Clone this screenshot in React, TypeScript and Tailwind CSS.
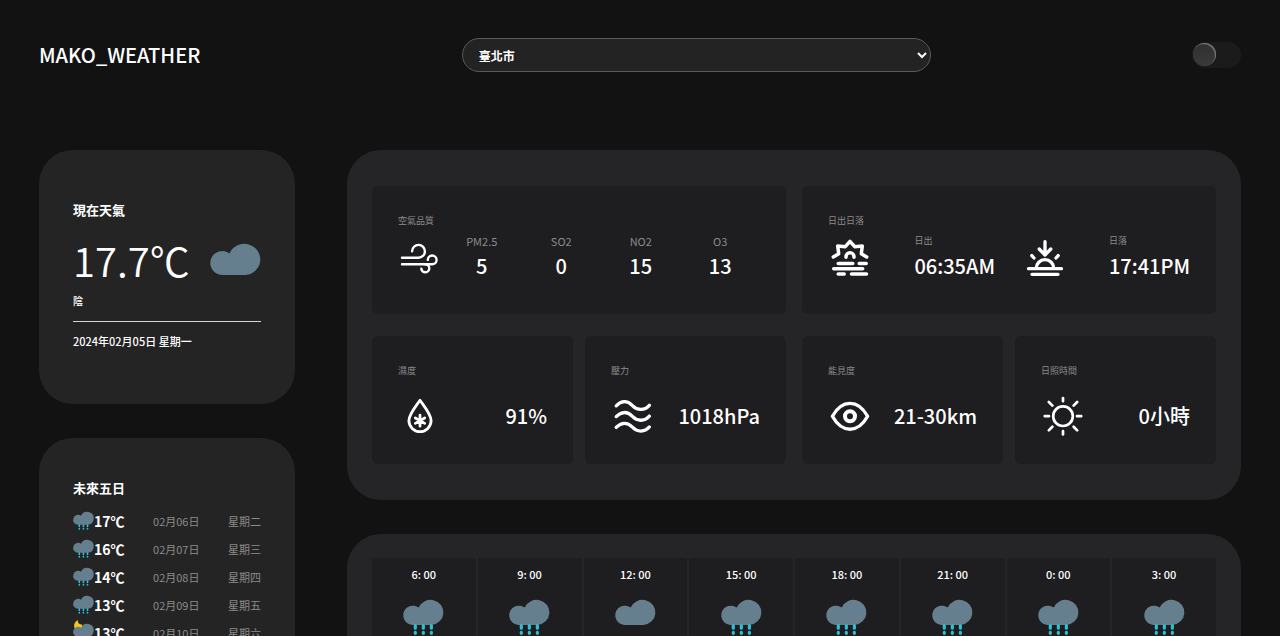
import React, { useState } from 'react';

type Weather = 'cloudy' | 'rain' | 'night-rain';

const AIR_QUALITY = [
  { name: 'PM2.5', value: 5 },
  { name: 'SO2', value: 0 },
  { name: 'NO2', value: 15 },
  { name: 'O3', value: 13 },
];

const FORECAST: { temp: number; date: string; day: string; weather: Weather }[] = [
  { temp: 17, date: '02月06日', day: '星期二', weather: 'rain' },
  { temp: 16, date: '02月07日', day: '星期三', weather: 'rain' },
  { temp: 14, date: '02月08日', day: '星期四', weather: 'rain' },
  { temp: 13, date: '02月09日', day: '星期五', weather: 'rain' },
  { temp: 13, date: '02月10日', day: '星期六', weather: 'night-rain' },
];

const HOURS: { time: string; weather: Weather }[] = [
  { time: '6: 00', weather: 'rain' },
  { time: '9: 00', weather: 'rain' },
  { time: '12: 00', weather: 'cloudy' },
  { time: '15: 00', weather: 'rain' },
  { time: '18: 00', weather: 'rain' },
  { time: '21: 00', weather: 'rain' },
  { time: '0: 00', weather: 'rain' },
  { time: '3: 00', weather: 'rain' },
];

const WeatherIcon: React.FC<{ weather: Weather; className?: string }> = ({ weather, className = '' }) => (
  <svg viewBox="0 0 51 43" className={`shrink-0 overflow-visible ${className}`} aria-hidden="true">
    {weather === 'night-rain' && (
      <path d="M12-9C4-6 1 2 4 11H22V1C15 2 11-3 12-9Z" fill="#f5c518" />
    )}
    <path
      d="M12 31A12 12 0 1 1 19.5 9.4A16 15.6 0 1 1 35.5 31Z"
      fill="#657f8e"
    />
    {weather !== 'cloudy' && (
      <g stroke="#2bc0d3" strokeWidth="4" strokeLinecap="round">
        <path d="M15.3 32v3M25.3 32v3M35.3 32v3" />
        <path d="M15.3 40.2v1.2M25.3 40.2v1.2M35.3 40.2v1.2" />
      </g>
    )}
  </svg>
);

// Shared frame for the white line icons
const LineIcon: React.FC<{ width?: number; children: React.ReactNode }> = ({ width = 3.3, children }) => (
  <svg
    viewBox="0 0 44 44"
    className="size-11 shrink-0"
    fill="none"
    stroke="#fff"
    strokeWidth={width}
    strokeLinecap="round"
    strokeLinejoin="round"
    aria-hidden="true"
  >
    {children}
  </svg>
);

const WindIcon = () => (
  <LineIcon width={2.4}>
    <path d="M4 20.7h16.3a6.4 6.4 0 1 0-6.2-6.4" />
    <path d="M4 27.3h30.3a4.4 4.4 0 1 0-4.5-4.4" />
    <path d="M27.3 27.3a4 4 0 1 1-4 4.3" />
  </LineIcon>
);

const SunriseIcon = () => (
  <LineIcon width={3.5}>
    <path d="M5.3 20l5.4-3.3L9.7 9l7.6.7L22 4.3l4.7 5.4 7.6-.7-1 7.7 5.4 3.3" />
    <path d="M18 20.3v-.5a4 4 0 0 1 8 0v.5" />
    <path d="M10.2 26.4h14.6M31.2 26.4h7M5.7 31.7h29M10.2 37.1h6M23.5 37.1h15" />
  </LineIcon>
);

const SunsetIcon = () => (
  <LineIcon>
    <path d="M22 4.6v13.2M16.2 12l5.8 6 5.8-6" />
    <path d="M8.8 18.6l2.2 2.4M35.2 18.6L33 21" />
    <path d="M13.2 31.5a8.8 8.8 0 0 1 17.6 0M5.5 31.7h33M9 37.3h26" />
  </LineIcon>
);

const HumidityIcon = () => (
  <LineIcon width={2.8}>
    <path d="M22 6.3C18 12.2 10.9 20.3 10.9 26.6a11.1 11.1 0 0 0 22.2 0C33.1 20.3 26 12.2 22 6.3Z" />
    <path d="M22 21.2v11M17.3 24l9.4 5.4M26.7 24l-9.4 5.4" />
  </LineIcon>
);

const PressureIcon = () => (
  <LineIcon>
    <path d="M5.2 11.8c5-5.2 11-5.6 16.2-.2s12.2 5 17-.3" />
    <path d="M5.2 22.6c5-5.2 11-5.6 16.2-.2s12.2 5 17-.3" />
    <path d="M5.2 33.4c5-5.2 11-5.6 16.2-.2s12.2 5 17-.3" />
  </LineIcon>
);

const EyeIcon = () => (
  <LineIcon width={3.4}>
    <path d="M4.4 22.3C9 14 14.5 9.4 22 9.4s13 4.6 17.6 12.9C35 30.6 29.5 35.2 22 35.2S9 30.6 4.4 22.3Z" />
    <circle cx="22" cy="22.3" r="5" strokeWidth="4" />
  </LineIcon>
);

const SunIcon = () => (
  <LineIcon width={2.7}>
    <circle cx="22" cy="22.2" r="9.8" />
    <path d="M22 4v3.2M22 37.2v3.2M3.8 22.2H8M36 22.2h4.2" />
    <path d="M7.8 8l3.6 3.6M36.2 8l-3.6 3.6M7.8 36.4l3.6-3.6M36.2 36.4l-3.6-3.6" />
  </LineIcon>
);

const Tile: React.FC<{ label: string; children: React.ReactNode }> = ({ label, children }) => (
  <section className="min-h-32 rounded-md bg-[#1e1d1f] px-6.5 pt-7">
    <h3 className="text-[9px] leading-3.5 text-[#8b8b8b]">{label}</h3>
    {children}
  </section>
);

const StatTile: React.FC<{ label: string; value: string; icon: React.ReactNode }> = ({ label, value, icon }) => (
  <Tile label={label}>
    <div className="mt-4 flex items-center justify-between whitespace-nowrap">
      {icon}
      <p className="text-xl leading-6 font-medium">{value}</p>
    </div>
  </Tile>
);

const SunTime: React.FC<{ name: string; time: string; icon: React.ReactNode }> = ({ name, time, icon }) => (
  <div className="flex items-center justify-between">
    {icon}
    <div className="flex flex-col gap-1.5 pb-1.5">
      <span className="text-[9px] leading-3.5 text-[#8b8b8b]">{name}</span>
      <span className="text-xl leading-6 font-medium">{time}</span>
    </div>
  </div>
);

export default function App() {
  const [city, setCity] = useState('臺北市');
  const [light, setLight] = useState(false);

  return (
    <div className="min-h-screen bg-[#121213] px-[39px] pt-[38px] pb-10 font-['Noto_Sans_CJK_TC',sans-serif] text-white">
      <header className="flex items-center justify-between">
        <h1 className="text-xl leading-8 font-medium">MAKO_WEATHER</h1>
        <select
          aria-label="縣市"
          value={city}
          onChange={(e) => setCity(e.target.value)}
          className="h-[34px] w-[39%] rounded-full border border-[#5a5a5a] bg-[#232323] pl-3 text-xs font-bold"
        >
          <option value="臺北市">臺北市</option>
        </select>
        <input
          type="checkbox"
          role="switch"
          aria-label="切換主題"
          checked={light}
          onChange={(e) => setLight(e.target.checked)}
          className="h-[26px] w-[49px] cursor-pointer appearance-none rounded-full bg-[#1b1b1b] p-px before:block before:size-[23px] before:rounded-full before:bg-linear-to-b before:from-[#303030] before:to-[#3a3a3a] before:shadow-[inset_-1px_1px_1px_#808080] checked:before:ml-auto"
        />
      </header>

      <div className="mt-[78px] flex items-start gap-[52px]">
        <aside className="flex w-64 shrink-0 flex-col gap-[34px]">
          <section className="rounded-[34px] bg-[#242425] px-[34px] pt-[50px] pb-[55px]">
            <h2 className="text-[13px] leading-5 font-bold">現在天氣</h2>
            <div className="mt-3.5 flex items-start justify-between">
              <p className="text-[40px] leading-[52px] font-[350] whitespace-nowrap">17.7℃</p>
              <WeatherIcon weather="cloudy" className="w-[51px] pt-2.5" />
            </div>
            <p className="mt-1.5 text-[10px] leading-4 font-medium">陰</p>
            <hr className="mt-3 border-[#d4d4d4]" />
            <p className="mt-[11px] text-[11px] leading-4 font-medium">2024年02月05日 星期一</p>
          </section>

          <section className="rounded-[34px] bg-[#242425] px-[34px] pt-10 pb-[50px]">
            <h2 className="text-[13px] leading-5 font-bold">未來五日</h2>
            <ul className="mt-[9px]">
              {FORECAST.map((f) => (
                <li key={f.date} className="flex h-7 items-center justify-between text-[11px] text-[#8b8b8b]">
                  <span className="flex items-center text-sm font-bold text-white">
                    <WeatherIcon weather={f.weather} className="w-[21px]" />
                    {f.temp}℃
                  </span>
                  <span>{f.date}</span>
                  <span>{f.day}</span>
                </li>
              ))}
            </ul>
          </section>
        </aside>

        <main className="flex min-w-0 flex-1 flex-col gap-[34px]">
          <div className="grid grid-cols-2 gap-x-4 gap-y-[22px] rounded-[34px] bg-[#252426] px-[25px] py-9">
            <Tile label="空氣品質">
              <div className="mt-1.5 flex items-center">
                <WindIcon />
                <dl className="grid flex-1 grid-cols-4 text-center">
                  {AIR_QUALITY.map((a) => (
                    <div key={a.name} className="flex flex-col gap-1.5 pb-1.5">
                      <dt className="text-[11px] leading-3.5 text-[#8b8b8b]">{a.name}</dt>
                      <dd className="text-xl leading-6 font-medium">{a.value}</dd>
                    </div>
                  ))}
                </dl>
              </div>
            </Tile>

            <Tile label="日出日落">
              <div className="mt-1.5 grid grid-cols-2 gap-7">
                <SunTime name="日出" time="06:35AM" icon={<SunriseIcon />} />
                <SunTime name="日落" time="17:41PM" icon={<SunsetIcon />} />
              </div>
            </Tile>

            <div className="grid grid-cols-2 gap-3">
              <StatTile label="濕度" value="91%" icon={<HumidityIcon />} />
              <StatTile label="壓力" value="1018hPa" icon={<PressureIcon />} />
            </div>
            <div className="grid grid-cols-2 gap-3">
              <StatTile label="能見度" value="21-30km" icon={<EyeIcon />} />
              <StatTile label="日照時間" value="0小時" icon={<SunIcon />} />
            </div>
          </div>

          <div className="rounded-[34px] bg-[#252426] px-[25px] py-6">
            <ol className="grid grid-cols-8 gap-0.5">
              {HOURS.map((h) => (
                <li key={h.time} className="flex flex-col items-center bg-[#1e1d1f] pt-2 pb-10">
                  <time className="text-[11px] leading-4 font-medium">{h.time}</time>
                  <WeatherIcon weather={h.weather} className="mt-[18px] w-[41px]" />
                </li>
              ))}
            </ol>
          </div>
        </main>
      </div>
    </div>
  );
}
